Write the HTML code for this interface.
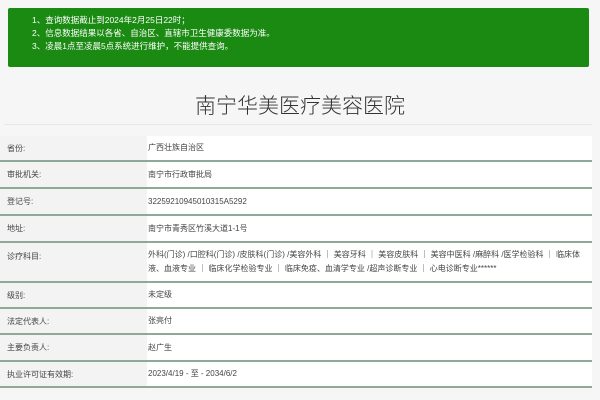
<!DOCTYPE html>
<html><head><meta charset="utf-8"><style>
*{margin:0;padding:0;box-sizing:border-box}
body{width:600px;height:400px;overflow:hidden;background:#f6f6f6;font-family:"Liberation Sans","Noto Sans CJK SC",sans-serif;color:#333;position:relative}
.banner{position:absolute;left:8px;top:8px;width:581px;height:59px;background:#1a8a12;border-radius:2px;color:#fff;font-size:8.5px;line-height:13px;padding:6px 0 0 24px}
h1{position:absolute;top:90px;width:600px;text-align:center;font-size:21px;font-weight:300;color:#333}
.hr{position:absolute;left:4px;width:588px;top:124px;height:1px;background:#e8e8e8}
.t{position:absolute;left:0;top:136px;width:592px}
.r{display:flex;border-bottom:2px solid #8fa899;font-size:8px;color:#444}
.l{width:147px;background:#f3f3f3;padding-left:7px;display:flex;align-items:center}
.v{flex:1;background:#fff;padding-left:1px;display:flex;align-items:center;line-height:14px}
</style></head><body>
<div class="banner">1、查询数据截止到2024年2月25日22时；<br>2、信息数据结果以各省、自治区、直辖市卫生健康委数据为准。<br>3、凌晨1点至凌晨5点系统进行维护，不能提供查询。</div>
<h1>南宁华美医疗美容医院</h1>
<div class="hr"></div>
<div class="t">
<div class="r" style="height:26px"><div class="l">省份:</div><div class="v">广西壮族自治区</div></div>
<div class="r" style="height:27px"><div class="l">审批机关:</div><div class="v">南宁市行政审批局</div></div>
<div class="r" style="height:27px"><div class="l">登记号:</div><div class="v">32259210945010315A5292</div></div>
<div class="r" style="height:27px"><div class="l">地址:</div><div class="v">南宁市青秀区竹溪大道1-1号</div></div>
<div class="r" style="height:40px"><div class="l" style="align-items:flex-start;padding-top:8px">诊疗科目:</div><div class="v" style="padding-right:4px">外科(门诊) /口腔科(门诊) /皮肤科(门诊) /美容外科 ｜ 美容牙科 ｜ 美容皮肤科 ｜ 美容中医科 /麻醉科 /医学检验科 ｜ 临床体液、血液专业 ｜ 临床化学检验专业 ｜ 临床免疫、血清学专业 /超声诊断专业 ｜ 心电诊断专业******</div></div>
<div class="r" style="height:26px"><div class="l">级别:</div><div class="v">未定级</div></div>
<div class="r" style="height:26px"><div class="l">法定代表人:</div><div class="v">张亮付</div></div>
<div class="r" style="height:27px"><div class="l">主要负责人:</div><div class="v">赵广生</div></div>
<div class="r" style="height:26px"><div class="l">执业许可证有效期:</div><div class="v">2023/4/19 - 至 - 2034/6/2</div></div>
</div>
</body></html>
